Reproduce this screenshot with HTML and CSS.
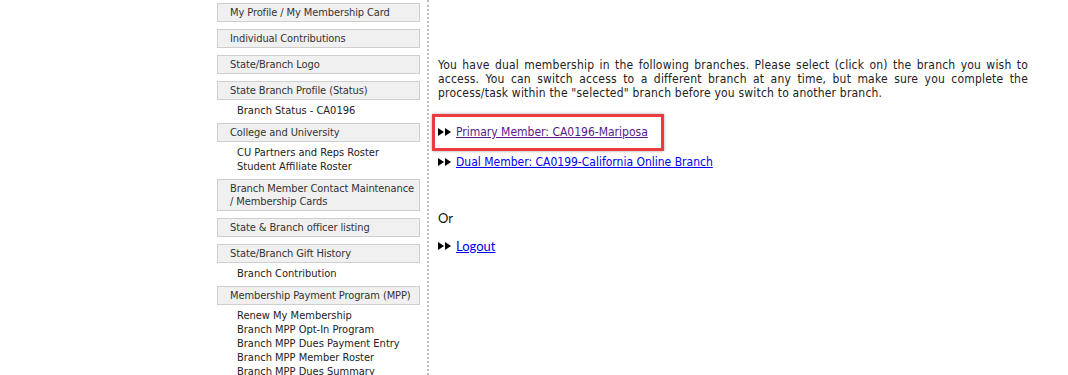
FILE: index.html
```html
<!DOCTYPE html>
<html lang="en">
<head>
  <meta charset="UTF-8">
  <title>Select Branch</title>
  <link rel="stylesheet" href="styles.css">
</head>
<body>
  <div class="page">
    <!-- left menu -->
    <div class="sidebar">
      <div class="menu-head">My Profile / My Membership Card</div>
      <div class="menu-head">Individual Contributions</div>
      <div class="menu-head">State/Branch Logo</div>
      <div class="menu-head">State Branch Profile (Status)</div>
      <div class="menu-sub">
        <div>Branch Status - CA0196</div>
      </div>
      <div class="menu-head">College and University</div>
      <div class="menu-sub">
        <div>CU Partners and Reps Roster</div>
        <div>Student Affiliate Roster</div>
      </div>
      <div class="menu-head">Branch Member Contact Maintenance / Membership Cards</div>
      <div class="menu-head">State &amp; Branch officer listing</div>
      <div class="menu-head">State/Branch Gift History</div>
      <div class="menu-sub">
        <div>Branch Contribution</div>
      </div>
      <div class="menu-head">Membership Payment Program (MPP)</div>
      <div class="menu-sub">
        <div>Renew My Membership</div>
        <div>Branch MPP Opt-In Program</div>
        <div>Branch MPP Dues Payment Entry</div>
        <div>Branch MPP Member Roster</div>
        <div>Branch MPP Dues Summary</div>
      </div>
    </div>
    <div class="divider"></div>
    <!-- main -->
    <div class="main">
      <p class="intro">You have dual membership in the following branches. Please select (click on) the branch you wish to access. You can switch access to a different branch at any time, but make sure you complete the process/task within the "selected" branch before you switch to another branch.</p>
      <div class="branch highlight">
        <span class="arrows"><svg width="14" height="8" viewBox="0 0 14 8"><path d="M0 0L6 4L0 8Z M7 0L13 4L7 8Z" fill="#000"/></svg></span>
        <a href="#" class="visited">Primary Member: CA0196-Mariposa</a>
      </div>
      <div class="branch">
        <span class="arrows"><svg width="14" height="8" viewBox="0 0 14 8"><path d="M0 0L6 4L0 8Z M7 0L13 4L7 8Z" fill="#000"/></svg></span>
        <a href="#">Dual Member: CA0199-California Online Branch</a>
      </div>
      <div class="or">Or</div>
      <div class="logout">
        <span class="arrows"><svg width="14" height="8" viewBox="0 0 14 8"><path d="M0 0L6 4L0 8Z M7 0L13 4L7 8Z" fill="#000"/></svg></span>
        <a href="#">Logout</a>
      </div>
    </div>
  </div>
</body>
</html>
```

FILE: styles.css
```css
body { margin:0; background:#fff; font-family:"DejaVu Sans Condensed", "DejaVu Sans", sans-serif; font-size:11px; color:#222; }
.page { display:flex; align-items:stretch; padding-left:217px; height:375px; overflow:hidden; }
.sidebar { width:203px; padding-top:3px; flex-shrink:0; }
.menu-head { border:1px solid #cfcfcf; background:#f0f0f0; color:#333; padding:2px 2px 2px 12px; line-height:13px; margin-bottom:7px; letter-spacing:-0.1px; }
.menu-sub { padding:0 0 0 20px; margin:-3px 0 5px; line-height:14px; color:#222; }
.divider { width:0; border-left:2px dotted #bdbdbd; margin-left:7px; }
.main { width:590px; padding:57px 0 0 9px; }
.intro { margin:0 0 14px; text-align:justify; line-height:14px; font-size:12px; letter-spacing:0.2px; padding-top:1px; }
.branch { display:flex; align-items:center; gap:4px; height:14px; margin-bottom:15px; font-size:12px; }
.branch.highlight { border:3px solid #ec3b40; margin:0 0 4px -6px; padding:8px 13px 9px 3px; width:fit-content; box-shadow:0 0 3px rgba(0,0,0,0.35); }
.arrows { display:inline-flex; }
a { color:#0000ee; }
a.visited { color:#551a8b; }
.or { font-family:Lato, sans-serif; font-size:13px; line-height:14px; color:#111; margin:42px 0 14px; }
.logout { display:flex; align-items:center; gap:4px; height:14px; font-family:Lato, sans-serif; font-size:13px; }
```
